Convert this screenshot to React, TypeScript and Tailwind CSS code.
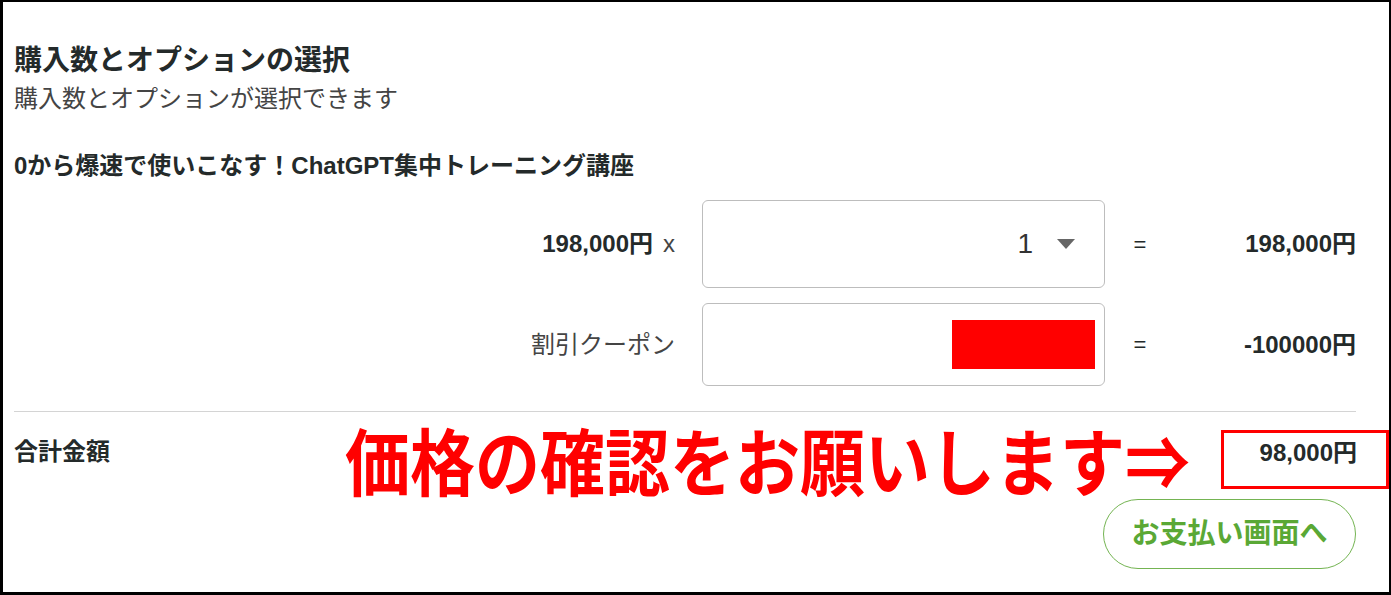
export default function App() {
  const font = { fontFamily: '"Liberation Sans", "Noto Sans CJK JP", sans-serif' };

  return (
    <div
      className="h-[595px] w-full bg-white border-t-2 border-l-[3px] border-r-2 border-b-[3px] border-black text-[#242a2a] overflow-hidden"
      style={font}
    >
      <div className="pl-[11px] pr-[33px] pt-[41px]">
        <h2 className="text-[28px] leading-[36px] font-bold">購入数とオプションの選択</h2>
        <p className="mt-[4px] text-[24px] leading-[32px] text-[#444]">購入数とオプションが選択できます</p>

        <h3 className="mt-[35px] text-[24px] leading-[32px] font-bold">
          0から爆速で使いこなす！ChatGPT集中トレーニング講座
        </h3>

        {/* 購入数 */}
        <div className="mt-[18px] flex items-center">
          <div className="w-[661px] text-right text-[24px]">
            <span className="font-bold">198,000円</span>
            <span className="ml-[10px] text-[#444]">x</span>
          </div>
          <div className="ml-[27px] w-[403px] h-[88px] rounded-[6px] border border-[#bdbdbd] flex items-center justify-end pr-[29px]">
            <span className="text-[28px] text-[#333]">1</span>
            <svg className="ml-[24px]" width="18" height="10" viewBox="0 0 18 10">
              <path d="M0 0 L18 0 L9 10 Z" fill="#666" />
            </svg>
          </div>
          <div className="w-[70px] text-center text-[22px]">=</div>
          <div className="flex-1 text-right text-[24px] font-bold">198,000円</div>
        </div>

        {/* クーポン */}
        <div className="mt-[15px] flex items-center">
          <div className="w-[661px] text-right text-[24px] text-[#444]">割引クーポン</div>
          <div className="ml-[27px] w-[403px] h-[83px] rounded-[6px] border border-[#bdbdbd] flex items-center justify-end pr-[9px]">
            <div className="w-[143px] h-[49px] bg-[#ff0000]" />
          </div>
          <div className="w-[70px] text-center text-[22px]">=</div>
          <div className="flex-1 text-right text-[24px] font-bold">-100000円</div>
        </div>

        <div className="mt-[25px] h-px bg-[#d4d4d4]" />

        {/* 合計 */}
        <div className="mt-[18px] h-[59px] flex items-start">
          <div className="w-[331px] text-[24px] leading-[44px] font-bold">合計金額</div>
          <div
            className="-mt-[3px] text-[65px] leading-[64px] font-bold text-[#ff0000] whitespace-nowrap scale-y-[1.12]"
            style={{ fontFamily: '"Noto Sans CJK JP", sans-serif' }}
          >
            価格の確認をお願いします⇒
          </div>
          <div className="ml-auto mr-[-33px] w-[168px] h-[59px] border-[3px] border-[#ff0000] flex items-start justify-end pr-[29px] pt-[5px]">
            <span className="text-[24px] leading-[30px] font-bold">98,000円</span>
          </div>
        </div>

        <div className="mt-[10px] flex justify-end">
          <button className="w-[253px] h-[70px] rounded-full border border-[#74b452] text-[#5aa835] text-[28px] font-bold bg-white">
            お支払い画面へ
          </button>
        </div>
      </div>
    </div>
  );
}
